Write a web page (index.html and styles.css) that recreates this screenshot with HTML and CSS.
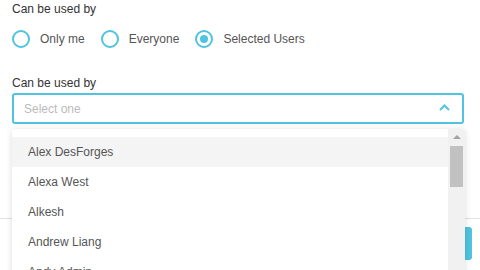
FILE: index.html
```html
<!DOCTYPE html>
<html lang="en">
<head>
    <meta charset="UTF-8">
    <meta name="viewport" content="width=device-width, initial-scale=1.0">
    <title>Can be used by</title>
    <link rel="stylesheet" href="styles.css">
</head>
<body>

    <div class="page">
        <div class="form">
            <div class="field-label">Can be used by</div>
            <div class="radio-row">
                <label class="radio"><span class="radio-mark"></span>Only me</label>
                <label class="radio"><span class="radio-mark"></span>Everyone</label>
                <label class="radio"><span class="radio-mark checked"></span>Selected Users</label>
            </div>

            <div class="field-label second">Can be used by</div>
            <div class="select">
                <span class="placeholder">Select one</span>
                <svg class="chevron" width="11" height="7" viewBox="0 0 11 7">
                    <polyline points="1,6 5.5,1.5 10,6" fill="none" stroke="#4fc3df" stroke-width="2"/>
                </svg>
            </div>
        </div>

        <div class="footer">
            <button class="btn-save">Save</button>
        </div>

        <!-- menu of the select, lies over the footer -->
        <div class="dropdown">
            <ul class="options">
                <li class="active">Alex DesForges</li>
                <li>Alexa West</li>
                <li>Alkesh</li>
                <li>Andrew Liang</li>
                <li>Andy Admin</li>
            </ul>
            <div class="scrollbar">
                <span class="scroll-arrow"></span>
                <span class="scroll-thumb"></span>
            </div>
        </div>
    </div>

</body>
</html>
```

FILE: styles.css
```css
/* Picker of users */
body {
    margin: 0;
    font-family: "Liberation Sans", Arial, sans-serif;
    font-size: 12px;
    background-color: #fff;
    color: #333;
}
.page {
    position: relative;
    width: 480px;
    height: 270px;
    overflow: hidden;
}
.form {
    padding: 0 16px 0 12px;
}
.field-label {
    line-height: 14px;
    margin-top: 2px;
    color: #333;
}
.field-label.second {
    margin-top: 28px;
}
.radio-row {
    display: flex;
    align-items: center;
    margin-top: 14px;
    height: 18px;
}
.radio {
    display: flex;
    align-items: center;
    margin-right: 16px;
    color: #555;
    line-height: 18px;
}
.radio-mark {
    width: 18px;
    height: 18px;
    box-sizing: border-box;
    border: 2px solid #4fc3df;
    border-radius: 50%;
    margin-right: 10px;
    display: flex;
    align-items: center;
    justify-content: center;
}
.radio-mark.checked::after {
    content: "";
    width: 8px;
    height: 8px;
    border-radius: 50%;
    background-color: #4fc3df;
}
.select {
    margin-top: 3px;
    height: 31px;
    box-sizing: border-box;
    border: 2px solid #4fc3df;
    border-radius: 3px;
    display: flex;
    align-items: center;
    justify-content: space-between;
    padding: 0 12px 0 10px;
}
.placeholder {
    color: #bbb;
}
.chevron {
    display: block;
    margin-top: -3px;
}
.footer {
    margin-top: 94px;
    border-top: 1px solid #e2e2e2;
    padding: 8px 8px 0 8px;
    display: flex;
    justify-content: flex-end;
}
.btn-save {
    width: 80px;
    height: 33px;
    border: none;
    border-radius: 3px;
    background-color: #4fc3df;
    color: #fff;
    font-family: inherit;
    font-size: 12px;
}
.dropdown {
    position: absolute;
    top: 129px;
    left: 12px;
    width: 453px;
    height: 160px;
    display: flex;
    background-color: #fff;
    border-radius: 3px;
    box-shadow: 0 1px 6px rgba(0, 0, 0, 0.15);
    overflow: hidden;
}
.options {
    list-style: none;
    margin: 0;
    padding: 8px 0 0 0;
    flex: 1;
}
.options li {
    height: 30px;
    line-height: 30px;
    padding-left: 16px;
    color: #555;
}
.options li.active {
    background-color: #f4f4f4;
}
.scrollbar {
    width: 17px;
    background-color: #f1f1f1;
    display: flex;
    flex-direction: column;
    align-items: center;
}
.scroll-arrow {
    margin-top: 6px;
    width: 0;
    height: 0;
    border-left: 4px solid transparent;
    border-right: 4px solid transparent;
    border-bottom: 4px solid #a3a3a3;
}
.scroll-thumb {
    margin-top: 7px;
    width: 13px;
    height: 41px;
    background-color: #c1c1c1;
}
```
